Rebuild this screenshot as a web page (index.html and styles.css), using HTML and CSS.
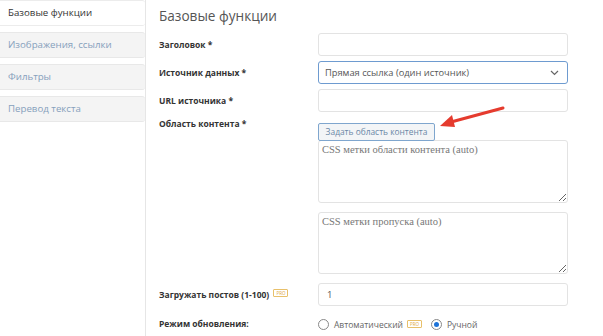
FILE: index.html
```html
<!DOCTYPE html>
<html lang="ru">
<head>
<meta charset="utf-8">
<link rel="stylesheet" href="styles.css">
</head>
<body>
<div class="page">
  <aside class="sidebar">
    <div class="tab active">Базовые функции</div>
    <div class="tab">Изображения, ссылки</div>
    <div class="tab">Фильтры</div>
    <div class="tab">Перевод текста</div>
  </aside>
  <main class="main">
    <h1 class="title">Базовые функции</h1>
    <div class="row r1">
      <label class="label">Заголовок *</label>
      <div class="field"><input class="input" type="text"></div>
    </div>
    <div class="row r2">
      <label class="label">Источник данных *</label>
      <div class="field">
        <div class="select">
          <span>Прямая ссылка (один источник)</span>
          <svg class="chev" width="9" height="6" viewBox="0 0 9 6"><path d="M1 1l3.5 3.5 3.5-3.5" fill="none" stroke="#666" stroke-width="1.2"/></svg>
        </div>
      </div>
    </div>
    <div class="row r3">
      <label class="label">URL источника *</label>
      <div class="field"><input class="input" type="text"></div>
    </div>
    <div class="row r4">
      <label class="label label-top">Область контента *</label>
      <div class="field stack">
        <div class="btn-wrap">
          <button class="btn">Задать область контента</button>
          <svg class="arrow" width="80" height="30" viewBox="0 0 80 30">
            <path d="M67 2 L15 16" stroke="#e53b2e" stroke-width="3" stroke-linecap="round" fill="none"/>
            <path d="M4 20 L16 9 L19 21 Z" fill="#e53b2e"/>
          </svg>
        </div>
        <textarea class="ta ta1" placeholder="CSS метки области контента (auto)"></textarea>
        <textarea class="ta ta2" placeholder="CSS метки пропуска (auto)"></textarea>
      </div>
    </div>
    <div class="row r5">
      <label class="label">Загружать постов (1-100) <span class="pro">PRO</span></label>
      <div class="field"><input class="input" type="text" value="1"></div>
    </div>
    <div class="row r6">
      <label class="label">Режим обновления:</label>
      <div class="field radios">
        <span class="radio"></span><span class="rtext">Автоматический</span><span class="pro">PRO</span>
        <span class="radio checked"></span><span class="rtext">Ручной</span>
      </div>
    </div>
  </main>
</div>
</body>
</html>
```
FILE: styles.css
```css
* { box-sizing: border-box; }
html, body { margin: 0; padding: 0; background: #fff; }
body { font-family: "Open Sans", "Liberation Sans", sans-serif; color: #333; }
.page { display: flex; min-height: 336px; }
.sidebar { width: 146px; flex: none; border-right: 1px solid #e6e6e6; }
.tab {
  height: 26px; line-height: 24px; padding-left: 8px;
  font-size: 9.7px; color: #86a0bc;
  background: #f4f4f4; border: 1px solid #e8e8e8; border-left: none; border-right: none;
  border-radius: 0 3px 3px 0; margin-bottom: 6px;
}
.tab.active { background: #fff; color: #333; border-color: #ececec; }
.main { padding-left: 13px; flex: 1; }
.title { font-size: 13.6px; font-weight: 400; color: #555; margin: 6px 0 0; line-height: 20px; }
.row { display: flex; align-items: flex-start; }
.label { width: 159px; flex: none; font-size: 8.5px; font-weight: 700; color: #333; line-height: 23px; }
.field { width: 250px; flex: none; }
.r1 { margin-top: 7px; }
.r2 { margin-top: 5px; }
.r3 { margin-top: 5px; }
.r4 { margin-top: 6px; }
.r5 { margin-top: 9px; }
.r6 { margin-top: 10px; }
.input {
  display: block; width: 250px; height: 23px; border: 1px solid #e3e3e3; border-radius: 3px;
  padding: 0 8px; font-family: inherit; font-size: 9.5px; color: #555; background: #fff; outline: none;
}
.select {
  height: 23px; border: 1px solid #6e9bd0; border-radius: 3px; display: flex; align-items: center;
  justify-content: space-between; padding: 0 8px 0 6px; font-size: 9.3px; color: #555;
}
.label-top { line-height: 12px; }
.stack { display: flex; flex-direction: column; }
.btn-wrap { position: relative; height: 18px; }
.btn {
  height: 18px; width: 117px; padding: 0; border: 1px solid #7fa6ce; border-radius: 2px; background: #f3f5f7;
  color: #6a87a6; font-family: inherit; font-size: 8.4px; line-height: 16px;
}
.arrow { position: absolute; left: 118px; top: -12px; }
.ta {
  display: block; width: 250px; height: 63px; border: 1px solid #e3e3e3; border-radius: 3px;
  font-family: "Liberation Serif", serif; font-size: 10.5px; padding: 3px 3px; resize: vertical; outline: none;
}
.ta::placeholder { color: #777; }
.ta1 { margin-top: 4px; }
.ta2 { margin-top: 9px; height: 62px; }
.pro {
  display: inline-block; font-size: 4.5px; line-height: 6px; padding: 0 2px; color: #e0a63a;
  border: 1px solid #e8c06a; border-radius: 1px; vertical-align: 3px; margin-left: 2px; font-weight: 400;
}
.r6 .label { line-height: 16px; }
.radios { display: flex; align-items: center; height: 16px; font-size: 8.5px; color: #666; }
.radio { width: 11px; height: 11px; border: 1px solid #888; border-radius: 50%; margin-right: 5px; position: relative; background: #fff; }
.radio.checked::after { content: ""; position: absolute; left: 2px; top: 2px; width: 5px; height: 5px; border-radius: 50%; background: #1e73d8; }
.rtext { margin-right: 4px; }
.radios .pro { margin-right: 9px; margin-left: 0; vertical-align: 0; }
```
